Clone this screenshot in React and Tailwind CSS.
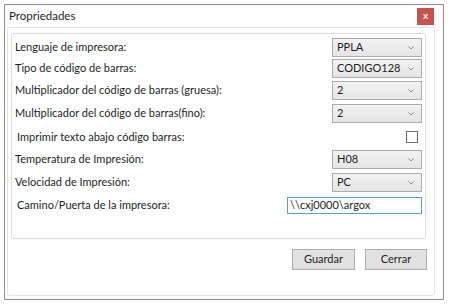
// Ventana de propiedades de impresora
const rows = [
  { label: "Lenguaje de impresora:", value: "PPLA", h: "h-[21px]" },
  { label: "Tipo de código de barras:", value: "CODIGO128", h: "h-[21px]" },
  { label: "Multiplicador del código de barras (gruesa):", value: "2", h: "h-[23px]" },
  { label: "Multiplicador del código de barras(fino):", value: "2", h: "h-[23px]" },
  { label: "Imprimir texto abajo código barras:", check: true, h: "h-[24px]" },
  { label: "Temperatura de Impresión:", value: "H08", h: "h-[20px]" },
  { label: "Velocidad de Impresión:", value: "PC", h: "h-[26px]" },
  { label: "Camino/Puerta de la impresora:", input: "\\\\cxj0000\\argox", h: "h-[20px]" },
];

function Combo({ value }) {
  return (
    <div className="w-[90px] h-[19px] flex items-center justify-between pl-[4px] pr-[7px] border border-[#acacac] bg-gradient-to-b from-[#f2f2f2] to-[#e5e5e5]">
      <span>{value}</span>
      <svg width="6" height="4" viewBox="0 0 6 4" className="mt-[1px]">
        <path d="M0.5 0.5 L3 3 L5.5 0.5" fill="none" stroke="#8a8a8a" strokeWidth="1" />
      </svg>
    </div>
  );
}

export default function App() {
  return (
    <div
      className="w-[450px] h-[304px] bg-white text-[11px] text-[#1e1e1e] overflow-hidden"
      style={{ fontFamily: '"Segoe UI", Lato, "Noto Sans", sans-serif' }}
    >
      <div className="ml-[4px] mt-[4px] w-[440px] h-[296px] border border-[#8f8f8f] flex flex-col">
        {/* Barra de título */}
        <div className="h-[21px] flex items-center justify-between pl-[4px] pr-[9px] pt-[1px]">
          <span className="text-[11.5px]">Propriedades</span>
          <div className="w-[17px] h-[17px] bg-[#c75050] flex items-center justify-center text-white text-[10px] font-bold leading-none pb-[2px]">
            x
          </div>
        </div>

        {/* Panel */}
        <div className="ml-[2px] mr-[8px] mt-[1px] h-[269px] border border-[#e4e4e4] rounded-[3px] px-[3px] pt-[5px] flex flex-col">
          <div className="mr-[5px] h-[206px] border border-[#dcdcdc] rounded-[3px] pt-[3px]">
            {rows.map((r, i) => (
              <div key={i} className={`${r.h} flex items-center justify-between pl-[3px] pr-[3px]`}>
                <span className={r.check || r.input ? "pl-[2px]" : ""}>{r.label}</span>
                {r.value && <Combo value={r.value} />}
                {r.check && (
                  <div className="w-[12px] h-[12px] border border-[#6d6d6d] bg-white mr-[4px]" />
                )}
                {r.input && (
                  <div className="w-[135px] h-[17px] border border-[#569de5] flex items-center pl-[2px] bg-white">
                    {r.input}
                  </div>
                )}
              </div>
            ))}
          </div>

          <div className="flex justify-end gap-[10px] mt-[10px] mr-[4px]">
            <button className="w-[63px] h-[21px] border border-[#adadad] bg-[#e1e1e1] text-[11px]">
              Guardar
            </button>
            <button className="w-[62px] h-[21px] border border-[#adadad] bg-[#e1e1e1] text-[11px]">
              Cerrar
            </button>
          </div>
        </div>
      </div>
    </div>
  );
}
